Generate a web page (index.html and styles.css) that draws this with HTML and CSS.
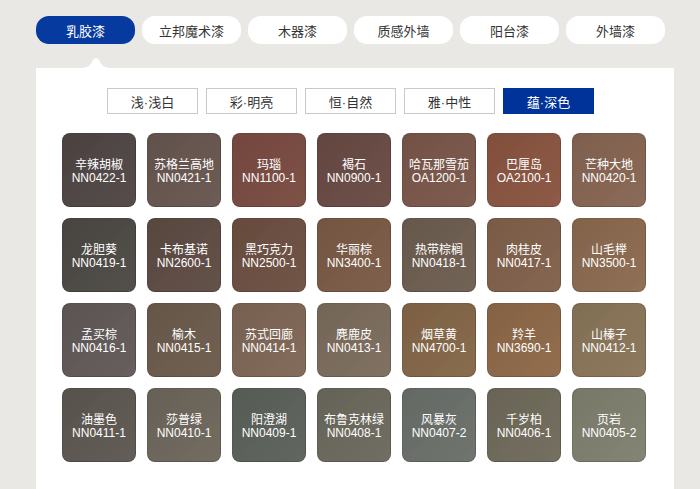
FILE: index.html
```html
<!DOCTYPE html>
<html lang="zh-CN">
<head>
<meta charset="utf-8">
<title>乳胶漆色卡</title>
<link rel="stylesheet" href="styles.css">
</head>
<body>
<div class="page">
  <nav class="tabs">
    <a class="tab active">乳胶漆</a>
    <a class="tab">立邦魔术漆</a>
    <a class="tab">木器漆</a>
    <a class="tab">质感外墙</a>
    <a class="tab">阳台漆</a>
    <a class="tab">外墙漆</a>
  </nav>
  <section class="panel">
    <svg class="notch" width="32" height="11" viewBox="0 0 32 11"><path d="M0 11 C8 11 10 9 13 3 Q16 -1 19 3 C22 9 24 11 32 11 Z" fill="#fff"/></svg>
    <div class="filters">
      <a class="filter">浅·浅白</a>
      <a class="filter">彩·明亮</a>
      <a class="filter">恒·自然</a>
      <a class="filter">雅·中性</a>
      <a class="filter active">蕴·深色</a>
    </div>
    <div class="grid">
      <div class="sw" style="background-color:#4f4644"><span class="nm">辛辣胡椒</span><span class="cd">NN0422-1</span></div>
      <div class="sw" style="background-color:#67564f"><span class="nm">苏格兰高地</span><span class="cd">NN0421-1</span></div>
      <div class="sw" style="background-color:#7a4b41"><span class="nm">玛瑙</span><span class="cd">NN1100-1</span></div>
      <div class="sw" style="background-color:#694a43"><span class="nm">褐石</span><span class="cd">NN0900-1</span></div>
      <div class="sw" style="background-color:#7a5649"><span class="nm">哈瓦那雪茄</span><span class="cd">OA1200-1</span></div>
      <div class="sw" style="background-color:#8a5441"><span class="nm">巴厘岛</span><span class="cd">OA2100-1</span></div>
      <div class="sw" style="background-color:#866451"><span class="nm">芒种大地</span><span class="cd">NN0420-1</span></div>

      <div class="sw" style="background-color:#4c4944"><span class="nm">龙胆葵</span><span class="cd">NN0419-1</span></div>
      <div class="sw" style="background-color:#5d4b43"><span class="nm">卡布基诺</span><span class="cd">NN2600-1</span></div>
      <div class="sw" style="background-color:#6c4f41"><span class="nm">黑巧克力</span><span class="cd">NN2500-1</span></div>
      <div class="sw" style="background-color:#7a5a45"><span class="nm">华丽棕</span><span class="cd">NN3400-1</span></div>
      <div class="sw" style="background-color:#6d5d50"><span class="nm">热带棕榈</span><span class="cd">NN0418-1</span></div>
      <div class="sw" style="background-color:#80604a"><span class="nm">肉桂皮</span><span class="cd">NN0417-1</span></div>
      <div class="sw" style="background-color:#8b6a4f"><span class="nm">山毛榉</span><span class="cd">NN3500-1</span></div>

      <div class="sw" style="background-color:#615957"><span class="nm">孟买棕</span><span class="cd">NN0416-1</span></div>
      <div class="sw" style="background-color:#6b5b4c"><span class="nm">榆木</span><span class="cd">NN0415-1</span></div>
      <div class="sw" style="background-color:#7e6655"><span class="nm">苏式回廊</span><span class="cd">NN0414-1</span></div>
      <div class="sw" style="background-color:#7b6c5c"><span class="nm">麂鹿皮</span><span class="cd">NN0413-1</span></div>
      <div class="sw" style="background-color:#846647"><span class="nm">烟草黄</span><span class="cd">NN4700-1</span></div>
      <div class="sw" style="background-color:#8e6848"><span class="nm">羚羊</span><span class="cd">NN3690-1</span></div>
      <div class="sw" style="background-color:#897558"><span class="nm">山榛子</span><span class="cd">NN0412-1</span></div>

      <div class="sw" style="background-color:#5d5751"><span class="nm">油墨色</span><span class="cd">NN0411-1</span></div>
      <div class="sw" style="background-color:#6d665b"><span class="nm">莎普绿</span><span class="cd">NN0410-1</span></div>
      <div class="sw" style="background-color:#5b615a"><span class="nm">阳澄湖</span><span class="cd">NN0409-1</span></div>
      <div class="sw" style="background-color:#6b695c"><span class="nm">布鲁克林绿</span><span class="cd">NN0408-1</span></div>
      <div class="sw" style="background-color:#6a6f6a"><span class="nm">风暴灰</span><span class="cd">NN0407-2</span></div>
      <div class="sw" style="background-color:#6f6a5a"><span class="nm">千岁柏</span><span class="cd">NN0406-1</span></div>
      <div class="sw" style="background-color:#7f7f6f"><span class="nm">页岩</span><span class="cd">NN0405-2</span></div>
    </div>
  </section>
</div>
</body>
</html>
```
FILE: styles.css
```css
html, body {
  margin: 0;
  padding: 0;
  background: #e9e8e5;
  height: 100%;
  overflow: hidden;
}
.page {
  padding: 16px 0 0 36px;
  font-family: "Noto Sans CJK SC", sans-serif;
}
.tabs {
  display: flex;
  gap: 7px;
}
.tab {
  width: 99px;
  height: 28px;
  border-radius: 13px;
  background: #fff;
  color: #333;
  font-size: 13px;
  display: flex;
  align-items: center;
  justify-content: center;
}
.tab.active {
  background: #063a9e;
  color: #fff;
}
.panel {
  position: relative;
  margin-top: 24px;
  width: 638px;
  height: 430px;
  background: #fff;
  padding-top: 20px;
  box-sizing: border-box;
}
.notch {
  position: absolute;
  left: 44px;
  top: -11px;
  display: block;
}
.filters {
  display: flex;
  gap: 8px;
  padding-left: 71px;
}
.filter {
  width: 89px;
  height: 24px;
  border: 1px solid #c9c9c9;
  color: #333;
  font-family: "Liberation Sans", "Noto Sans CJK SC", sans-serif;
  font-size: 13px;
  display: flex;
  align-items: center;
  justify-content: center;
  background: #fff;
}
.filter.active {
  background: #003399;
  border-color: #003399;
  color: #fff;
}
.grid {
  margin-top: 19px;
  padding-left: 26px;
  display: grid;
  grid-template-columns: repeat(7, 74px);
  grid-auto-rows: 74px;
  gap: 11px;
}
.sw {
  border-radius: 8px;
  box-sizing: border-box;
  border: 1px solid rgba(0, 0, 0, 0.12);
  background-image: linear-gradient(135deg, rgba(0,0,0,0.06), rgba(255,255,255,0.04));
  color: #fff;
  display: flex;
  flex-direction: column;
  align-items: center;
  justify-content: center;
  padding-top: 1px;
}
.nm {
  font-size: 12px;
  line-height: 14px;
  white-space: nowrap;
}
.cd {
  font-family: "Liberation Sans", Arial, sans-serif;
  font-size: 12px;
  line-height: 14px;
}
```
